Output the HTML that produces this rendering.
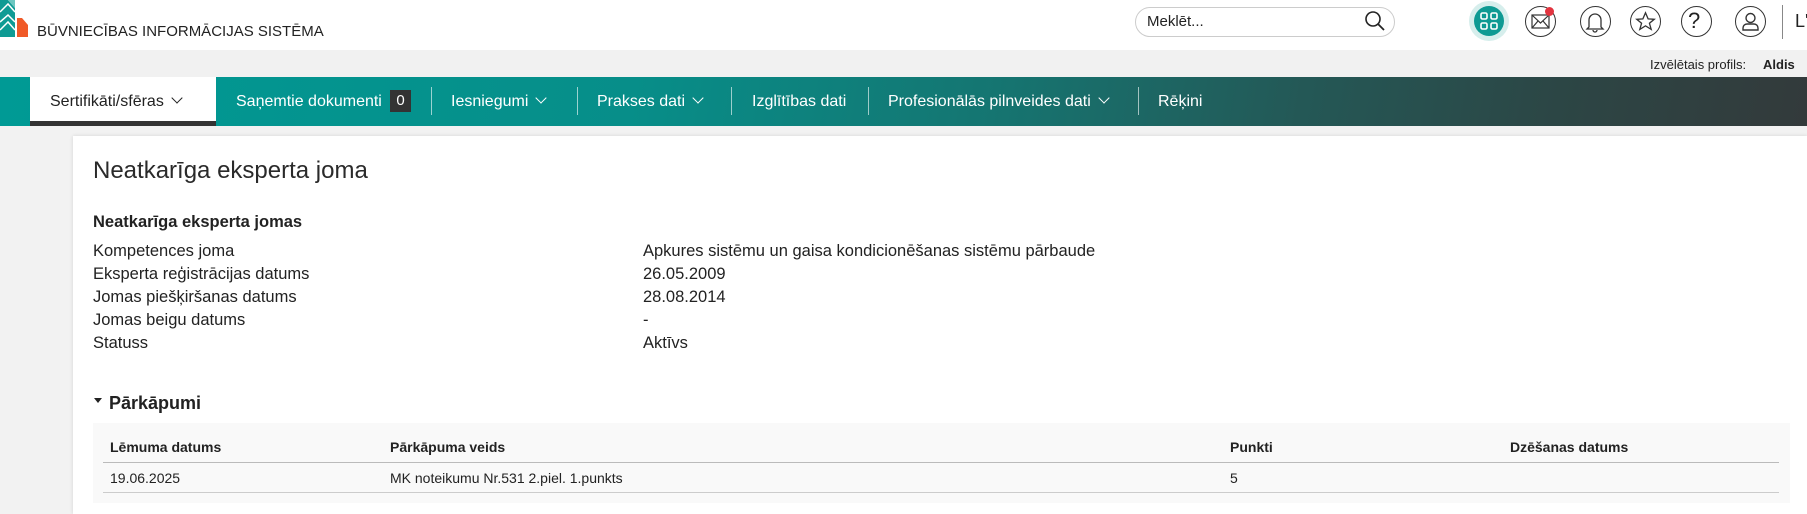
<!DOCTYPE html>
<html><head><meta charset="utf-8"><style>
*{margin:0;padding:0;box-sizing:border-box}
body{width:1807px;height:514px;overflow:hidden;background:#f2f2f2;font-family:"Liberation Sans",Arial,sans-serif;color:#222;position:relative}
.abs{position:absolute;white-space:nowrap}
#top{position:absolute;left:0;top:0;width:1807px;height:50px;background:#fff}
#gbar{position:absolute;left:0;top:50px;width:1807px;height:27px;background:#f1f1f1}
#nav{position:absolute;left:0;top:77px;width:1807px;height:49px;background:linear-gradient(100deg,#009a95 0%,#078e89 35%,#157571 55%,#245856 72%,#2c4645 86%,#333a3b 100%)}
.ni{position:absolute;top:92px;color:#fff;font-size:16px;white-space:nowrap}
.sep{position:absolute;top:87px;width:1px;height:28px;background:rgba(255,255,255,.6)}
.chev{display:inline-block;width:8px;height:8px;border-right:1.6px solid currentColor;border-bottom:1.6px solid currentColor;transform:rotate(45deg);margin-left:9px;position:relative;top:-4px}
#card{position:absolute;left:73px;top:136px;width:1734px;height:378px;background:#fff;box-shadow:0 0 4px rgba(0,0,0,.12)}
.ic{position:absolute;top:6px;width:31px;height:31px;border:1.3px solid #333;border-radius:50%}
.lbl{position:absolute;left:93px;font-size:16.5px;color:#222}
.val{position:absolute;left:643px;font-size:16.5px;color:#222}
.th{position:absolute;top:439px;font-size:14px;font-weight:bold;color:#222}
.td{position:absolute;top:470px;font-size:14px;color:#222}
</style></head><body>
<div id="top"></div>
<svg class="abs" style="left:0;top:0" width="32" height="40" viewBox="0 0 32 40">
<polygon points="0,0 8,0 15,8 15,37 0,37" fill="#0f9b94"/>
<polygon points="8,0 15,0 15,8" fill="#6cc6c0"/>
<polyline points="0,12 8,4 15,12" fill="none" stroke="#fff" stroke-width="1.5"/>
<polyline points="0,22 8,15 15,22" fill="none" stroke="#fff" stroke-width="1.5"/>
<polyline points="0,30 8,22 15,30" fill="none" stroke="#fff" stroke-width="1.5"/>
<polygon points="17,18 22,18 28,25 28,37 17,37" fill="#f05a28"/>
</svg>
<div class="abs" style="left:37px;top:23px;font-size:15px;color:#222">BŪVNIECĪBAS INFORMĀCIJAS SISTĒMA</div>
<div class="abs" style="left:1135px;top:7px;width:260px;height:30px;border:1px solid #ccc;border-radius:15px"></div>
<div class="abs" style="left:1147px;top:13px;font-size:15px;color:#222">Meklēt...</div>
<svg class="abs" style="left:1364px;top:10px" width="22" height="22" viewBox="0 0 22 22"><circle cx="9" cy="9" r="7" fill="none" stroke="#222" stroke-width="1.6"/><line x1="14" y1="14" x2="20" y2="20" stroke="#222" stroke-width="1.8"/></svg>
<div class="abs" style="left:1469px;top:1px;width:40px;height:40px;border-radius:50%;background:#d6eeec"></div>
<div class="abs" style="left:1474px;top:6px;width:30px;height:30px;border-radius:50%;background:#0e9a93"></div>
<svg class="abs" style="left:1480px;top:12px" width="18" height="18" viewBox="0 0 18 18" fill="none" stroke="#fff" stroke-width="1.6"><rect x="1" y="1" width="6" height="6" rx="1.5"/><rect x="11" y="1" width="6" height="6" rx="1.5"/><rect x="1" y="11" width="6" height="6" rx="1.5"/><rect x="11" y="11" width="6" height="6" rx="1.5"/></svg>
<div class="ic" style="left:1525px"></div>
<svg class="abs" style="left:1531px;top:14px" width="19" height="15" viewBox="0 0 19 15" fill="none" stroke="#333" stroke-width="1.2"><rect x="1" y="1" width="17" height="13"/><polyline points="1,1 9.5,9 18,1"/><line x1="1" y1="14" x2="7" y2="7"/><line x1="18" y1="14" x2="12" y2="7"/></svg>
<div class="abs" style="left:1545px;top:7px;width:9px;height:9px;border-radius:50%;background:#e2343f"></div>
<div class="ic" style="left:1580px"></div>
<svg class="abs" style="left:1585px;top:11px" width="20" height="22" viewBox="0 0 20 22" fill="none" stroke="#333" stroke-width="1.3"><path d="M4 16 V9 a6 6 0 0 1 12 0 V16 L18 18 H2 Z"/><path d="M8 19 a2 2 0 0 0 4 0"/></svg>
<div class="ic" style="left:1630px"></div>
<svg class="abs" style="left:1635px;top:11px" width="21" height="21" viewBox="0 0 24 24" fill="none" stroke="#333" stroke-width="1.5"><polygon points="12,2 15,9 22,9.5 16.5,14 18.5,21 12,17 5.5,21 7.5,14 2,9.5 9,9"/></svg>
<div class="ic" style="left:1681px"></div>
<div class="abs" style="left:1688px;top:8px;font-size:22px;color:#222">?</div>
<div class="ic" style="left:1735px"></div>
<svg class="abs" style="left:1740px;top:11px" width="21" height="21" viewBox="0 0 21 21" fill="none" stroke="#333" stroke-width="1.4"><circle cx="10.5" cy="7" r="4.5"/><path d="M3 19 v-2 a4 4 0 0 1 4 -4 h7 a4 4 0 0 1 4 4 v2 Z"/></svg>
<div class="abs" style="left:1782px;top:5px;width:1px;height:34px;background:#888"></div>
<div class="abs" style="left:1795px;top:11px;font-size:18px;color:#222">L'</div>
<div id="gbar"></div>
<div class="abs" style="left:1650px;top:57px;font-size:13px;color:#222">Izvēlētais profils:</div>
<div class="abs" style="left:1763px;top:57px;font-size:13px;font-weight:bold;color:#222">Aldis</div>
<div id="nav"></div>
<div class="abs" style="left:30px;top:77px;width:186px;height:49px;background:#fff;border-bottom:5px solid #333"></div>
<div class="ni" style="left:50px;top:93px;color:#222">Sertifikāti/sfēras<span class="chev"></span></div>
<div class="ni" style="left:236px;top:93px">Saņemtie dokumenti</div>
<div class="abs" style="left:390px;top:90px;width:21px;height:22px;background:#333;color:#fff;font-size:15px;text-align:center;line-height:22px">0</div>
<div class="sep" style="left:431px"></div>
<div class="ni" style="left:451px;top:93px">Iesniegumi<span class="chev"></span></div>
<div class="sep" style="left:577px"></div>
<div class="ni" style="left:597px;top:93px">Prakses dati<span class="chev"></span></div>
<div class="sep" style="left:731px"></div>
<div class="ni" style="left:752px;top:93px">Izglītības dati</div>
<div class="sep" style="left:868px"></div>
<div class="ni" style="left:888px;top:93px">Profesionālās pilnveides dati<span class="chev"></span></div>
<div class="sep" style="left:1138px"></div>
<div class="ni" style="left:1158px;top:93px">Rēķini</div>
<div id="card"></div>
<div class="abs" style="left:93px;top:157px;font-size:24px;color:#2a2a2a">Neatkarīga eksperta joma</div>
<div class="abs" style="left:93px;top:213px;font-size:16.5px;font-weight:bold;color:#222">Neatkarīga eksperta jomas</div>
<div class="lbl" style="top:242px">Kompetences joma</div><div class="val" style="top:242px">Apkures sistēmu un gaisa kondicionēšanas sistēmu pārbaude</div>
<div class="lbl" style="top:265px">Eksperta reģistrācijas datums</div><div class="val" style="top:265px">26.05.2009</div>
<div class="lbl" style="top:288px">Jomas piešķiršanas datums</div><div class="val" style="top:288px">28.08.2014</div>
<div class="lbl" style="top:311px">Jomas beigu datums</div><div class="val" style="top:311px">-</div>
<div class="lbl" style="top:334px">Statuss</div><div class="val" style="top:334px">Aktīvs</div>
<div class="abs" style="left:94px;top:398px;width:0;height:0;border-left:4px solid transparent;border-right:4px solid transparent;border-top:5px solid #222"></div>
<div class="abs" style="left:109px;top:393px;font-size:18px;font-weight:bold;color:#222">Pārkāpumi</div>
<div class="abs" style="left:93px;top:423px;width:1697px;height:80px;background:#f9f9f9"></div>
<div class="abs" style="left:103px;top:462px;width:1676px;height:1px;background:#bbb"></div>
<div class="abs" style="left:103px;top:492px;width:1676px;height:1px;background:#ccc"></div>
<div class="th" style="left:110px">Lēmuma datums</div>
<div class="th" style="left:390px">Pārkāpuma veids</div>
<div class="th" style="left:1230px">Punkti</div>
<div class="th" style="left:1510px">Dzēšanas datums</div>
<div class="td" style="left:110px">19.06.2025</div>
<div class="td" style="left:390px">MK noteikumu Nr.531 2.piel. 1.punkts</div>
<div class="td" style="left:1230px">5</div>
</body></html>
